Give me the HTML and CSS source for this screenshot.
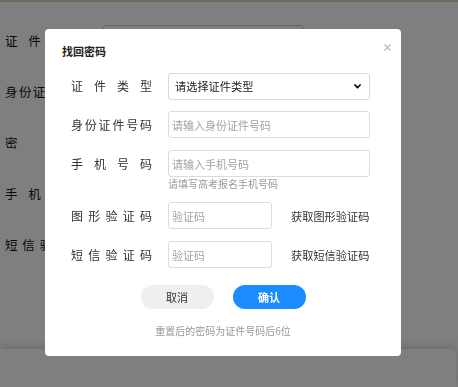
FILE: index.html
```html
<!DOCTYPE html>
<html lang="zh-CN">
<head>
<meta charset="utf-8">
<title>找回密码</title>
<link rel="stylesheet" href="styles.css">
</head>
<body>
<div class="page">
  <div class="topline"></div>
  <div class="bg-form">
    <div class="bg-row"><span class="bg-label">证件类型</span><div class="bg-input"></div></div>
    <div class="bg-row"><span class="bg-label">身份证件号码</span><div class="bg-input"></div></div>
    <div class="bg-row"><span class="bg-label">密码</span><div class="bg-input"></div></div>
    <div class="bg-row"><span class="bg-label">手机号码</span><div class="bg-input"></div></div>
    <div class="bg-row"><span class="bg-label">短信验证码</span><div class="bg-input"></div></div>
  </div>
  <div class="bg-footer"></div>
</div>

<div class="mask">
  <div class="modal">
    <div class="modal-head">
      <h2 class="title">找回密码</h2>
      <button class="close" type="button" aria-label="关闭">
        <svg width="7" height="7" viewBox="0 0 7 7"><path d="M0.5 0.5L6.5 6.5M6.5 0.5L0.5 6.5" stroke="#b5b5b5" stroke-width="1.1" fill="none"/></svg>
      </button>
    </div>
    <form class="form">
      <div class="row">
        <label class="label">证件类型</label>
        <div class="select-wrap">
          <select class="select"><option>请选择证件类型</option></select>
          <svg class="chev" width="7" height="5" viewBox="0 0 7 5"><path d="M1 1L3.5 3.6L6 1" stroke="#111" stroke-width="1.8" fill="none" stroke-linecap="round" stroke-linejoin="round"/></svg>
        </div>
      </div>
      <div class="row">
        <label class="label">身份证件号码</label>
        <input class="input" type="text" placeholder="请输入身份证件号码">
      </div>
      <div class="group">
        <div class="row">
          <label class="label">手机号码</label>
          <input class="input" type="text" placeholder="请输入手机号码">
        </div>
        <p class="hint">请填写高考报名手机号码</p>
      </div>
      <div class="row">
        <label class="label">图形验证码</label>
        <input class="input short" type="text" placeholder="验证码">
        <a class="code-link">获取图形验证码</a>
      </div>
      <div class="row">
        <label class="label">短信验证码</label>
        <input class="input short" type="text" placeholder="验证码">
        <a class="code-link">获取短信验证码</a>
      </div>
    </form>
    <div class="actions">
      <button class="btn btn-cancel" type="button">取消</button>
      <button class="btn btn-ok" type="button">确认</button>
    </div>
    <p class="note">重置后的密码为证件号码后6位</p>
  </div>
</div>
</body>
</html>
```

FILE: styles.css
```css
* { box-sizing: border-box; }
html, body { margin: 0; padding: 0; }
body {
  font-family: "Noto Sans CJK SC", "Noto Sans", sans-serif;
  background: #ffffff;
  color: #333;
  width: 458px;
  height: 387px;
  overflow: hidden;
}

.page {
  height: 387px;
  display: flex;
  flex-direction: column;
}
.topline {
  height: 2px;
  background: #d9d9b8;
}
.bg-form {
  padding: 23px 0 0 5px;
  display: flex;
  flex-direction: column;
  gap: 21px;
}
.bg-row {
  display: flex;
  align-items: center;
  height: 30px;
  gap: 15px;
}
.bg-label {
  width: 82px;
  font-size: 12.5px;
  color: #111;
  text-align: justify;
  text-align-last: justify;
}
.bg-input {
  width: 202px;
  height: 30px;
  border: 1px solid #c8c8c8;
  border-radius: 4px;
}
.bg-footer {
  margin-top: auto;
  width: 456px;
  height: 38px;
  border-radius: 0 5px 0 0;
  background: #fff;
  box-shadow: 0 -2px 10px rgba(0, 0, 0, 0.18);
}

.mask {
  position: fixed;
  inset: 0;
  background: rgba(0, 0, 0, 0.5);
  padding: 29px 0 0 45px;
}
.modal {
  width: 356px;
  height: 327px;
  background: #fff;
  border-radius: 4px;
  padding-top: 15px;
  display: flex;
  flex-direction: column;
}
.modal-head {
  display: flex;
  justify-content: space-between;
  align-items: flex-start;
  padding: 0 10px 0 17px;
}
.title {
  margin: 0;
  font-size: 11px;
  line-height: 14px;
  font-weight: 700;
  color: #222;
}
.close {
  border: 0;
  background: none;
  padding: 0;
  width: 7px;
  height: 7px;
  display: block;
}
.close svg { display: block; }

.form {
  padding: 14px 0 0 26px;
  display: flex;
  flex-direction: column;
  gap: 12px;
}
.row {
  display: flex;
  align-items: center;
  gap: 16px;
}
.label {
  width: 81px;
  font-size: 12px;
  color: #333;
  text-align: justify;
  text-align-last: justify;
  line-height: 16px;
}
.select-wrap {
  position: relative;
  width: 202px;
  height: 27px;
}
.select {
  appearance: none;
  -webkit-appearance: none;
  width: 100%;
  height: 100%;
  border: 1px solid #d9d9d9;
  border-radius: 3px;
  background: #fff;
  padding: 0 0 0 6px;
  font-family: inherit;
  font-size: 11.2px;
  color: #222;
}
.chev {
  position: absolute;
  right: 9px;
  top: 12px;
}
.input {
  width: 202px;
  height: 27px;
  border: 1px solid #dcdcdc;
  border-radius: 3px;
  padding: 0 0 0 3px;
  font-family: inherit;
  font-size: 11px;
  color: #333;
  background: #fff;
}
.input::placeholder { color: #a3a3a3; }
.input.short { width: 104px; }
.code-link {
  margin-left: 3px;
  font-size: 11.2px;
  color: #333;
}
.group {
  display: flex;
  flex-direction: column;
}
.hint {
  margin: 1px 0 0 97px;
  font-size: 10px;
  line-height: 12px;
  color: #999;
}

.actions {
  margin-top: 17px;
  display: flex;
  justify-content: center;
  gap: 19px;
}
.btn {
  width: 73px;
  height: 24px;
  border: 0;
  border-radius: 12px;
  font-family: inherit;
  font-size: 11px;
  padding: 0;
}
.btn-cancel {
  background: #efefef;
  color: #333;
}
.btn-ok {
  background: #1a8cff;
  color: #fff;
  font-weight: 700;
}
.note {
  margin: 15px 0 0;
  text-align: center;
  font-size: 10px;
  line-height: 14px;
  color: #999;
}
```
